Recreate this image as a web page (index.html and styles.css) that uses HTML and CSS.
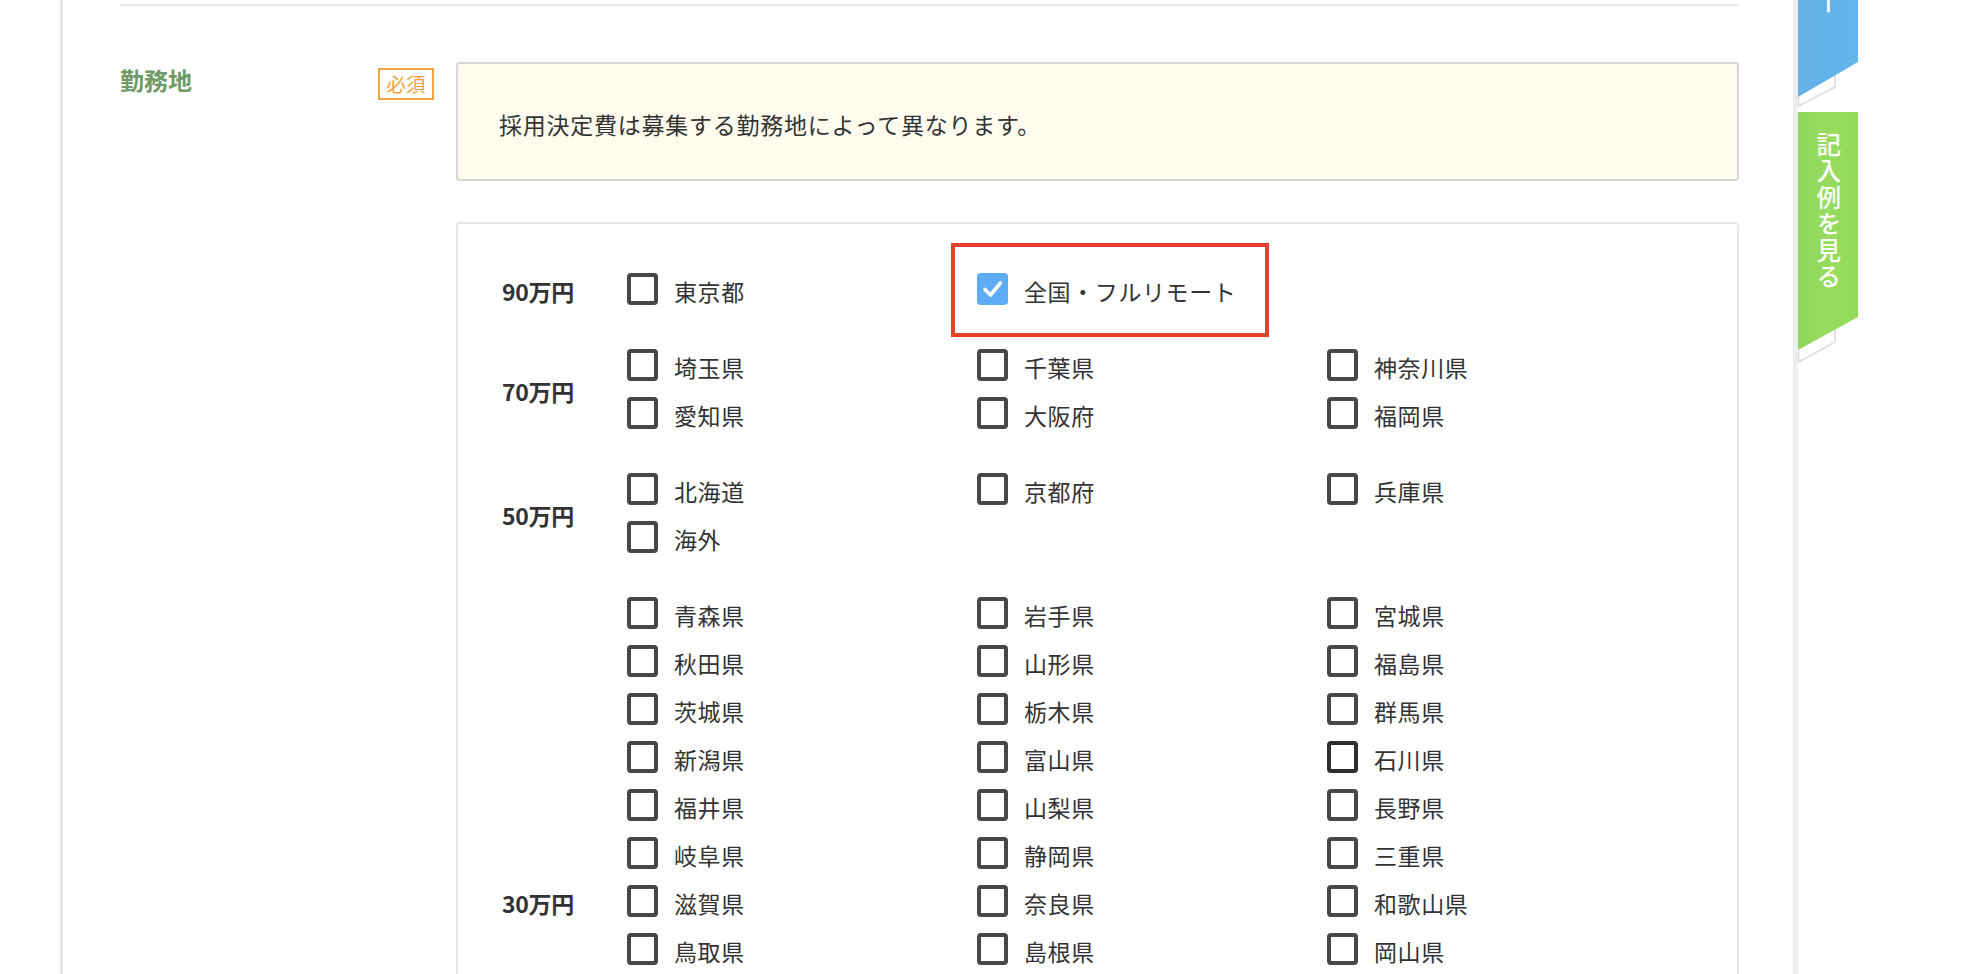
FILE: index.html
```html
<!DOCTYPE html>
<html lang="ja">
<head>
<meta charset="utf-8">
<title>勤務地</title>
<link rel="stylesheet" href="styles.css">
</head>
<body>
<div class="frame">
  <div class="rule"></div>
  <section class="field">
    <div class="field-label">勤務地</div>
    <div class="field-badge"><span class="badge">必須</span></div>
    <div class="field-body">
      <div class="notice">採用決定費は募集する勤務地によって異なります。</div>
      <div class="choices">
        <div class="tier">
          <div class="tier-price">90万円</div>
          <ul class="tier-list">
            <li class="opt"><span class="box"></span>東京都</li>
            <li class="opt opt-marked"><span class="box box-on"><svg viewBox="0 0 31 32" width="31" height="32"><polyline points="8,16.5 13.5,22 23.5,10" fill="none" stroke="#fff" stroke-width="3.6" stroke-linecap="round" stroke-linejoin="round"/></svg></span>全国・フルリモート</li>
          </ul>
        </div>
        <div class="tier">
          <div class="tier-price">70万円</div>
          <ul class="tier-list">
            <li class="opt"><span class="box"></span>埼玉県</li>
            <li class="opt"><span class="box"></span>千葉県</li>
            <li class="opt"><span class="box"></span>神奈川県</li>
            <li class="opt"><span class="box"></span>愛知県</li>
            <li class="opt"><span class="box"></span>大阪府</li>
            <li class="opt"><span class="box"></span>福岡県</li>
          </ul>
        </div>
        <div class="tier">
          <div class="tier-price">50万円</div>
          <ul class="tier-list">
            <li class="opt"><span class="box"></span>北海道</li>
            <li class="opt"><span class="box"></span>京都府</li>
            <li class="opt"><span class="box"></span>兵庫県</li>
            <li class="opt"><span class="box"></span>海外</li>
          </ul>
        </div>
        <div class="tier">
          <div class="tier-price">30万円</div>
          <ul class="tier-list">
            <li class="opt"><span class="box"></span>青森県</li>
            <li class="opt"><span class="box"></span>岩手県</li>
            <li class="opt"><span class="box"></span>宮城県</li>
            <li class="opt"><span class="box"></span>秋田県</li>
            <li class="opt"><span class="box"></span>山形県</li>
            <li class="opt"><span class="box"></span>福島県</li>
            <li class="opt"><span class="box"></span>茨城県</li>
            <li class="opt"><span class="box"></span>栃木県</li>
            <li class="opt"><span class="box"></span>群馬県</li>
            <li class="opt"><span class="box"></span>新潟県</li>
            <li class="opt"><span class="box"></span>富山県</li>
            <li class="opt"><span class="box box-dark"></span>石川県</li>
            <li class="opt"><span class="box"></span>福井県</li>
            <li class="opt"><span class="box"></span>山梨県</li>
            <li class="opt"><span class="box"></span>長野県</li>
            <li class="opt"><span class="box"></span>岐阜県</li>
            <li class="opt"><span class="box"></span>静岡県</li>
            <li class="opt"><span class="box"></span>三重県</li>
            <li class="opt"><span class="box"></span>滋賀県</li>
            <li class="opt"><span class="box"></span>奈良県</li>
            <li class="opt"><span class="box"></span>和歌山県</li>
            <li class="opt"><span class="box"></span>鳥取県</li>
            <li class="opt"><span class="box"></span>島根県</li>
            <li class="opt"><span class="box"></span>岡山県</li>
            <li class="opt"><span class="box"></span>広島県</li>
            <li class="opt"><span class="box"></span>山口県</li>
            <li class="opt"><span class="box"></span>徳島県</li>
            <li class="opt"><span class="box"></span>香川県</li>
            <li class="opt"><span class="box"></span>愛媛県</li>
            <li class="opt"><span class="box"></span>高知県</li>
            <li class="opt"><span class="box"></span>佐賀県</li>
            <li class="opt"><span class="box"></span>長崎県</li>
            <li class="opt"><span class="box"></span>熊本県</li>
            <li class="opt"><span class="box"></span>大分県</li>
            <li class="opt"><span class="box"></span>宮崎県</li>
            <li class="opt"><span class="box"></span>鹿児島県</li>
            <li class="opt"><span class="box"></span>沖縄県</li>
          </ul>
        </div>
      </div>
    </div>
  </section>
</div>

<aside class="side-tabs">
  <a class="tab tab-blue" href="#"><span class="tab-text">プレビュー</span></a>
  <svg class="tab-fold fold-blue" width="60" height="40" viewBox="0 0 60 40"><path d="M0.5,2 L0.5,32 L37,13 L37,1" fill="#fff" stroke="#dcdcdc" stroke-width="1.5" stroke-linejoin="round"/></svg>
  <a class="tab tab-green" href="#"><span class="tab-text">記入例を見る</span></a>
  <svg class="tab-fold fold-green" width="60" height="40" viewBox="0 0 60 40"><path d="M0.5,2 L0.5,34 L37,14 L37,1" fill="#fff" stroke="#dcdcdc" stroke-width="1.5" stroke-linejoin="round"/></svg>
</aside>
</body>
</html>
```

FILE: styles.css
```css
*,
*::before,
*::after {
  box-sizing: border-box;
}

html, body {
  margin: 0;
  padding: 0;
  background: #fff;
}

body {
  font-family: "Noto Sans CJK JP", "Noto Sans", sans-serif;
  color: #333;
  font-size: 23px;
  overflow: hidden;
}

/* page column with its side borders */
.frame {
  margin-left: 60px;
  width: 1738px;
  min-height: 974px;
  border-left: 3px solid #e4e4e4;
  border-right: 5px solid #ededed;
  padding: 4px 54px 0 57px;
}

.rule {
  height: 2px;
  background: #ececec;
}

/* form row: label / required badge / input area */
.field {
  display: grid;
  grid-template-columns: 258px 78px 1fr;
  padding-top: 56px;
}

.field-label {
  color: #6f9b66;
  font-weight: 700;
  font-size: 24px;
  line-height: 34px;
  margin-top: 1px;
}

.field-badge {
  padding-top: 6px;
}

.badge {
  display: flex;
  align-items: center;
  justify-content: center;
  width: 56px;
  height: 32px;
  border: 2px solid #f1a547;
  color: #f1a040;
  font-size: 19.5px;
  line-height: 1;
}

.notice {
  background: #fffcef;
  border: 2px solid #d6d6d6;
  border-radius: 4px;
  padding: 43px 40px 38px 41px;
  font-size: 23px;
  line-height: 34px;
  color: #333;
  letter-spacing: 0.75px;
}

/* price tiers with prefecture checkboxes */
.choices {
  margin-top: 41px;
  border: 2px solid #e6e6e6;
  border-radius: 4px;
  padding: 42px 0 40px 44px;
  display: flex;
  flex-direction: column;
  gap: 28px;
}

.tier {
  display: flex;
}

.tier-price {
  width: 125px;
  flex: none;
  align-self: center;
  font-weight: 700;
  font-size: 23px;
  line-height: 34px;
  color: #333;
  letter-spacing: -0.3px;
  padding-top: 2px;
}

.tier-list {
  list-style: none;
  margin: 0;
  padding: 0;
  display: grid;
  grid-template-columns: repeat(3, 350px);
  grid-auto-rows: 48px;
}

.opt {
  display: flex;
  align-items: center;
  font-size: 23px;
  letter-spacing: 0.6px;
  color: #333;
  position: relative;
  padding-top: 2px;
}

.box {
  flex: none;
  width: 31px;
  height: 32px;
  margin-top: -4px;
  margin-right: 16px;
  border: 4px solid #474747;
  border-radius: 4px;
  background: #fff;
}

.box-dark {
  border-color: #2e2e2e;
}

.box-on {
  border: none;
  background: #5eabf6;
}

.box-on svg {
  display: block;
}

/* red highlight frame around the selected option */
.opt-marked::after {
  content: "";
  position: absolute;
  left: -26px;
  top: -23px;
  width: 318px;
  height: 94px;
  border: 4px solid #e5402b;
  pointer-events: none;
}

/* floating tabs on the right edge */
.side-tabs {
  position: absolute;
  left: 1798px;
  top: 0;
  width: 60px;
}

.tab {
  position: absolute;
  left: 0;
  width: 60px;
  display: flex;
  justify-content: center;
  text-decoration: none;
  color: #fff;
  z-index: 2;
}

.tab-text {
  writing-mode: vertical-rl;
  line-height: 1;
}

.tab-blue {
  top: -150px;
  height: 247px;
  background: linear-gradient(to right, #66b0e3, #62b3ea 50%, #66b6ee);
  clip-path: polygon(0 0, 100% 0, 100% calc(100% - 35px), 0 100%);
  padding-top: 50px;
}

.tab-blue .tab-text {
  font-size: 23px;
  font-weight: 500;
}

.tab-green {
  top: 112px;
  height: 238px;
  background: linear-gradient(to right, #90d75a, #97dc5e 50%, #93da5b);
  clip-path: polygon(0 0, 100% 0, 100% calc(100% - 33px), 0 100%);
  padding-top: 20px;
}

.tab-green .tab-text {
  font-size: 24.5px;
  font-weight: 500;
  letter-spacing: 2px;
}

.tab-fold {
  position: absolute;
  left: 0;
  z-index: 1;
}

.fold-blue {
  top: 74px;
}

.fold-green {
  top: 328px;
}
```
